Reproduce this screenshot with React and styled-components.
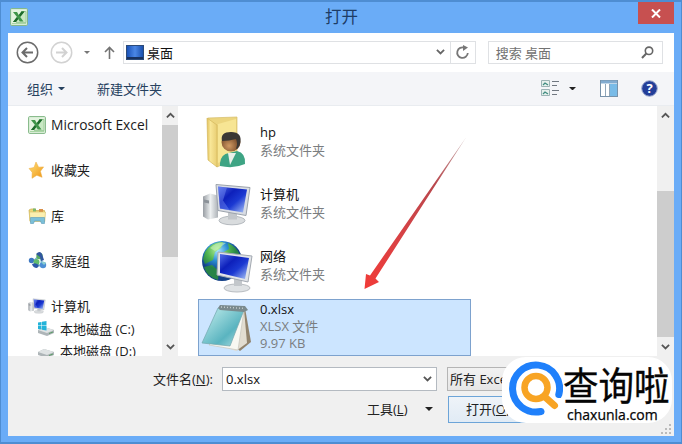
import React from "react";
import styled, { createGlobalStyle, css } from "styled-components";

const Global = createGlobalStyle`
  *{box-sizing:border-box}
  body{margin:0;overflow:hidden}
  svg{display:block;flex:none}
`;

const Window = styled.div`
  width:682px;height:444px;display:flex;flex-direction:column;
  background:#6aacf7;border:solid #4e8dd2;border-width:2px 1px 2px 1px;
  padding:0 7px 6px;
  font:13px/18px "Open Sans","Noto Sans CJK SC",sans-serif;color:#222;
`;
const TitleBar = styled.header`
  height:31px;flex:none;display:flex;align-items:flex-start;justify-content:space-between;
  color:#1d3c66;padding-right:2px;
`;
const TitleSide = styled.div`width:60px;display:flex;padding:6px 0 0 2px;`;
const Title = styled.h1`margin:0;font-size:16.5px;font-weight:400;line-height:29px;padding-left:3px;`;
const CloseSide = styled.div`width:60px;display:flex;justify-content:flex-end;`;
const Close = styled.button`
  width:36px;height:22px;border:0;background:#c75050;padding:0;margin-right:-2px;
  display:flex;align-items:center;justify-content:center;
`;
const NavBar = styled.nav`
  height:39px;flex:none;background:#fff;display:flex;align-items:center;padding:0 11px 0 8px;
`;
const NavIcon = styled.span`margin-right:${p => p.$gap}px;`;
const Field = styled.div`
  height:23px;width:${p => p.$w}px;border:1px solid #dfe1e4;background:#fff;
  display:flex;align-items:center;color:${p => p.$color || "#111"};
`;
const Address = styled(Field)`padding:0 5px 0 2px;gap:3px;`;
const Reload = styled(Field)`justify-content:center;border-left:0;margin-right:12px;`;
const Search = styled(Field)`padding:0 8px 0 7px;`;
const Grow = styled.span`flex:1;`;
const Toolbar = styled.div`
  height:34px;flex:none;background:#f4f5f8;border-bottom:1px solid #e9ecf0;
  display:flex;align-items:center;padding:0 16px 0 19px;color:#26415f;
`;
const ToolText = styled.span`display:flex;align-items:center;gap:5px;margin-right:32px;`;
const ToolIcon = styled.span`margin-left:${p => p.$gap}px;`;
const Body = styled.main`height:250px;flex:none;display:flex;background:#fff;overflow:hidden;`;
const Sidebar = styled.aside`width:154px;overflow:hidden;padding-top:7px;`;
const TreeItem = styled.div`
  display:flex;align-items:center;gap:5px;color:#1c1c1c;white-space:nowrap;
  height:${p => (p.$child ? 22 : 24)}px;
  padding-left:${p => (p.$child ? 29 : 20)}px;
  margin-bottom:${p => (p.$child ? 0 : p.$tight ? 0 : 21.3)}px;
  ${p => p.$latin && css`font-size:13.8px;`}
`;
const ScrollBar = styled.div`
  width:${p => p.$w}px;flex:none;background:#f0f0f0;display:flex;flex-direction:column;align-items:center;
`;
const ScrollButton = styled.div`height:18px;display:flex;align-items:center;justify-content:center;`;
const Thumb = styled.div`
  width:100%;background:#cdcdcd;height:${p => p.$h}px;
  margin:${p => p.$top}px 0 auto;
`;
const Files = styled.section`flex:1;padding:5px 0 0 20px;position:relative;`;
const FileItem = styled.div`
  width:273px;height:62px;display:flex;align-items:center;padding-left:4px;gap:9px;
  border:1px solid transparent;
  ${p => p.$selected && css`height:57px;margin-top:2px;background:#cce5ff;border-color:#7da2ce;line-height:17px;`}
`;
const FileText = styled.div`display:flex;flex-direction:column;padding-bottom:2px;`;
const Name = styled.span`color:#111;`;
const Detail = styled.span`color:#7a7d80;`;
const ArrowMark = styled.svg`position:absolute;left:183px;top:30px;`;
const Footer = styled.footer`
  height:80px;flex:none;background:#f0f0f0;display:flex;flex-direction:column;padding-top:11px;position:relative;
`;
const FormRow = styled.div`display:flex;align-items:center;height:${p => p.$h}px;`;
const FileLabel = styled.label`width:214px;padding-left:145px;white-space:nowrap;`;
const NameBox = styled.div`
  width:215px;height:24px;border:1px solid #b4bac1;background:#fff;color:#111;
  display:flex;align-items:center;justify-content:space-between;padding:0 4px 0 3px;margin-right:10px;
`;
const TypeBox = styled.div`
  width:217px;height:24px;border:1px solid #b5b5b5;background:linear-gradient(#f2f2f2,#e6e6e6);
  padding:2px 2px;white-space:nowrap;overflow:hidden;
`;
const Tools = styled.div`
  width:440px;padding:0 15px 0 359px;display:flex;justify-content:space-between;align-items:center;white-space:nowrap;
`;
const OpenButton = styled.button`
  width:104px;height:27px;border:1px solid #6ca4d8;background:linear-gradient(#eef3f8,#e1ebf5);
  font:inherit;color:#222;padding:0 0 0 17px;text-align:left;white-space:nowrap;
`;
const Watermark = styled.div`
  position:absolute;left:494px;top:1px;width:170px;height:66px;border-radius:24px;background:#fff;
  display:flex;padding:4px 0 0 6px;
`;
const BrandText = styled.div`
  display:flex;flex-direction:column;color:#050505;white-space:nowrap;
`;
const BrandName = styled.span`
  font:400 35.5px/42px "Noto Sans CJK SC",sans-serif;height:42px;transform:translateY(1px) scaleY(1.1);
  -webkit-text-stroke:.3px #050505;
`;
const BrandUrl = styled.span`font:500 14px/16px "Open Sans",sans-serif;padding-left:4px;margin-top:4px;-webkit-text-stroke:.25px #050505;`;
const Grip = styled.svg`position:absolute;right:3px;bottom:2px;`;

const Chevron = ({ up, c = "#555", s = 9 }) => (
  <svg width={s} height={s * 0.7} viewBox="0 0 10 7"><path d={up ? "M1 6 5 2l4 4" : "M1 1l4 4 4-4"} fill="none" stroke={c} strokeWidth="2" /></svg>
);
const Triangle = ({ c = "#222", w = 8 }) => (
  <svg width={w} height={w / 2} viewBox="0 0 8 4"><path d="M0 0h8L4 4z" fill={c} /></svg>
);
const ExcelIcon = ({ s = 17 }) => (
  <svg width={s} height={s} viewBox="0 0 18 18">
    <rect x=".6" y=".6" width="16.8" height="16.8" rx="1" fill="#e3f3df" stroke="#7fb583" />
    <path d="M11 3.500h5v11H6" fill="#c9e8c4" stroke="#8cc08a" strokeWidth=".7" />
    <path d="M3 4h4l1.700 3L11.500 3.500h3l-4.300 5.500 3.300 4.500h-3.700L8.200 11 6 14H3l4-5z" fill="#3f9549" />
    <path d="M11.500 3.500h3l-4 5-1.500-1.500zM3 14l3.700-4.700L8.200 11 6 14z" fill="#1e6a2c" />
    <path d="M2 15.500h14" stroke="#a9d6a5" />
  </svg>
);
const Back = ({ c, forward }) => (
  <svg width="23" height="23" viewBox="0 0 23 23" fill="none" stroke={c}>
    <circle cx="11.500" cy="11.500" r="10.200" strokeWidth="1.500" />
    <path d={forward ? "M6 11.500h10M12 7l4.500 4.500L12 16" : "M17 11.500H7M11 7l-4.500 4.500L11 16"} strokeWidth="2" />
  </svg>
);
const StarIcon = () => (
  <svg width="18" height="18" viewBox="0 0 18 18">
    <defs><linearGradient id="st" x2="1" y2="1"><stop stopColor="#ffe27a" /><stop offset="1" stopColor="#ef9413" /></linearGradient></defs>
    <path d="M8 1l2.600 5.200 5-.3-3.200 4.400 1.700 6-5.300-2-4.800 3 .2-6L1 7.500l5-1z" fill="url(#st)" stroke="#eba83b" strokeWidth=".5" />
  </svg>
);
const LibraryIcon = () => (
  <svg width="19" height="18" viewBox="0 0 19 18">
    <path d="M1 3l2-1h4l1 1.500h8.500V14H2z" fill="#efd879" stroke="#c8ac4d" strokeWidth=".7" />
    <path d="M5 1.500h3v3H5z" fill="#7fb86c" /><path d="M11 2h4v3h-4z" fill="#d9904a" />
    <path d="M1.500 5h16l-.7 9.500H2z" fill="#fbefb0" stroke="#d5bd67" strokeWidth=".6" />
    <path d="M2.500 10.500h14V16.500h-3l-1-2.500h-6l-1 2.500h-3z" fill="#7bc0d9" stroke="#5a9ab8" strokeWidth=".6" />
  </svg>
);
const HomegroupIcon = () => (
  <svg width="19" height="18" viewBox="0 0 19 18">
    <path d="M6 9l5-5M7 10l5 4M13 5l1 8" stroke="#7bb5cc" strokeWidth="2" />
    <circle cx="3.500" cy="8.500" r="2.700" fill="#3e78c2" /><circle cx="11.500" cy="4" r="3.200" fill="#58aa64" />
    <path d="M8 2q4-4 6 0l2 6-3 1-1-4z" fill="#31579f" />
    <circle cx="8.500" cy="10" r="3" fill="#63bd6d" /><path d="M4 12q5-2 7 2l-2 2q-4 0-5-4z" fill="#2c59a8" />
    <circle cx="15" cy="13" r="3.200" fill="#4d8fd4" /><path d="M13 10q3-1 5 1l-2 2z" fill="#8acfcf" />
  </svg>
);
const ComputerIcon = ({ w, h }) => (
  <svg width={w} height={h} viewBox="0 0 50 42">
    <defs>
      <linearGradient id="scr" x2="1" y2="1"><stop stopColor="#536de8" /><stop offset=".35" stopColor="#0d20bb" /><stop offset=".6" stopColor="#1b39d2" /><stop offset="1" stopColor="#b4cdf7" /></linearGradient>
      <linearGradient id="tow" x2="1"><stop stopColor="#989da3" /><stop offset=".5" stopColor="#edf0f1" /><stop offset="1" stopColor="#aeb3b8" /></linearGradient>
    </defs>
    <path d="M1 13l7-3 8 2v22L6 36 1 33z" fill="url(#tow)" />
    <path d="M2 16l5 1v3l-5-1z" fill="#8c9299" />
    <ellipse cx="30" cy="37" rx="13" ry="4.300" fill="#d9dcde" stroke="#b5babf" />
    <path d="M26 29h9v7h-9z" fill="#c3c7cb" />
    <path d="M14 1l34 3-4 28-28-5z" fill="#d9dde4" stroke="#9ca3ac" />
    <path d="M16 3l29 3-4 23-23-4z" fill="url(#scr)" />
    <path d="M16 3l9 1-4 13 7 10-10-2z" fill="#8ca5ff" opacity=".35" />
  </svg>
);
const NetworkIcon = () => (
  <svg width="52" height="53" viewBox="0 0 52 53">
    <defs>
      <radialGradient id="gl" cx=".4" cy=".25"><stop stopColor="#a7e4ff" /><stop offset=".5" stopColor="#2a8ed2" /><stop offset="1" stopColor="#123f87" /></radialGradient>
      <radialGradient id="land" cx=".4" cy=".2"><stop stopColor="#b5f09c" /><stop offset=".6" stopColor="#4fb450" /><stop offset="1" stopColor="#278347" /></radialGradient>
    </defs>
    <circle cx="21" cy="21" r="20" fill="url(#gl)" />
    <path d="M4 12Q11 1 22 2l-2 6-6 4-2 8-8 4-2-5zM27 3q9 4 12 12l-8-2-5 4-5-4 7-4zM3 27l8-2 7 6-1 9Q6 37 3 27z" fill="url(#land)" />
    <path d="M9 8q8-7 16-5L14 11z" fill="#c9f2bd" opacity=".6" />
    <ellipse cx="36" cy="48" rx="13" ry="4" fill="#dfe2e4" stroke="#b9bdc1" /><path d="M33 37h8v9h-8z" fill="#c3c7cb" />
    <path d="M17 12l34 4-4 26-31-7z" fill="#e1e4e8" stroke="#a3a9b1" />
    <path d="M19 14l29 4-4 21-25-6z" fill="url(#scr)" />
  </svg>
);
const UserFolderIcon = () => (
  <svg width="50" height="53" viewBox="0 0 50 53">
    <defs>
      <linearGradient id="fo" x2="1"><stop stopColor="#e3c15b" /><stop offset=".35" stopColor="#f8e697" /><stop offset="1" stopColor="#e9ce73" /></linearGradient>
      <radialGradient id="face" cx=".4" cy=".7"><stop stopColor="#d09a63" /><stop offset="1" stopColor="#7d4f2c" /></radialGradient>
    </defs>
    <path d="M6 2l29-1v41l-20 9z" fill="#ecd57e" stroke="#d6bd6a" strokeWidth=".7" />
    <path d="M16 8l18-5v36l-18 8z" fill="#f7e594" />
    <path d="M5 2l10 7v42l-9-7z" fill="url(#fo)" stroke="#d4b75b" strokeWidth=".7" />
    <path d="M18 47q1-9 9-10l8-2q9 2 8 13-11 5-25 2z" fill="#3ea484" />
    <path d="M26 37l2 12 6-12z" fill="#e9f0e9" />
    <circle cx="29" cy="26" r="9.500" fill="url(#face)" />
    <path d="M20 25q-2-9 9-9 12 0 9 12-2 5-4 5 2-6 0-10-7 2-14 2z" fill="#3b3835" />
  </svg>
);
const NotebookIcon = () => (
  <svg width="52" height="51" viewBox="0 0 52 51">
    <defs><linearGradient id="nb" x2="1" y2="1"><stop stopColor="#9bd3d7" /><stop offset=".25" stopColor="#9fdadd" /><stop offset=".65" stopColor="#5ab4c0" /><stop offset="1" stopColor="#b9e3e6" /></linearGradient></defs>
    <path d="M44 6l6 34-11 9-5-4z" fill="#91836d" /><path d="M43 7l3 34-11 8-14-5z" fill="#e2ddd1" />
    <path d="M43 8L37 48 8 43z" fill="#f8f8f2" stroke="#c7c5bd" strokeWidth=".7" />
    <path d="M17 6l26 2-14 36-28-3z" fill="url(#nb)" stroke="#72a6ad" strokeWidth=".7" />
    <path d="M17 6l2-3 25 1 3 4-4 2-24-2z" fill="#7a8a8d" /><path d="M20 5l24 1.500" stroke="#c4cccc" strokeWidth="1.500" strokeDasharray="1 2" />
  </svg>
);
const DriveIcon = ({ system }) => (
  <svg width="18" height="16" viewBox="0 0 18 16">
    <path d="M1 9l6-3 10 3v3l-7 3-9-3z" fill="#aeb5b8" /><path d="M1 9l6-3 10 3-7 3z" fill="#dfe3e4" /><path d="M12 12.500l4-1.500" stroke="#5b9d66" />
    {system && <path d="M1 1.500l3.500-.6v3.600H1zM5 .8L9.500 0v4.500H5zM1 5h3.500v3.600L1 8zM5 5h4.500v4.400L5 8.700z" fill="#22b3d9" />}
  </svg>
);
const BrandLogo = () => (
  <svg width="55" height="58" viewBox="0 0 55 58" fill="none" strokeLinecap="round">
    <path d="M33 50.500A23.500 23.500 0 1 1 50.800 33.500" stroke="#1f80fb" strokeWidth="7" />
    <circle cx="28" cy="26.500" r="11.500" stroke="#f8a423" strokeWidth="6.500" />
    <path d="M37 36l9.500 8.500" stroke="#f8a423" strokeWidth="7" />
  </svg>
);

const places = [
  ["Microsoft Excel", <ExcelIcon s={18} />, true],
  ["收藏夹", <StarIcon />],
  ["库", <LibraryIcon />],
  ["家庭组", <HomegroupIcon />],
];
const files = [
  ["hp", <UserFolderIcon />], ["计算机", <ComputerIcon w={50} h={43} />], ["网络", <NetworkIcon />],
];
const IconSlot = styled.span`width:${p => p.$w}px;flex:none;display:flex;justify-content:center;`;

export default function App() {
  return (
    <Window>
      <Global />
      <TitleBar>
        <TitleSide><ExcelIcon s={18} /></TitleSide>
        <Title>打开</Title>
        <CloseSide><Close aria-label="关闭"><svg width="10" height="9" viewBox="0 0 10 9"><path d="M1 .5l8 8M9 .5l-8 8" stroke="#fff" strokeWidth="2" /></svg></Close></CloseSide>
      </TitleBar>
      <NavBar>
        <NavIcon $gap={11}><Back c="#6b6b6b" /></NavIcon>
        <NavIcon $gap={11}><Back c="#d2d2d2" forward /></NavIcon>
        <NavIcon $gap={14}><Triangle c="#777" w={6} /></NavIcon>
        <NavIcon $gap={8}><svg width="11" height="13" viewBox="0 0 11 13"><path d="M5.500 13V2M1 6l4.500-4.500L10 6" fill="none" stroke="#737373" strokeWidth="1.600" /></svg></NavIcon>
        <Address $w={329}>
          <svg width="18" height="15" viewBox="0 0 18 15"><defs><linearGradient id="dk" x2="1"><stop stopColor="#174fb5" /><stop offset=".5" stopColor="#4b87e5" /><stop offset="1" stopColor="#174ca9" /></linearGradient></defs><rect x=".5" y=".5" width="17" height="14" fill="url(#dk)" stroke="#2d4b78" /><path d="M1 13h16" stroke="#18315e" strokeWidth="2" /></svg>
          桌面<Grow /><Chevron c="#666" />
        </Address>
        <Reload $w={25}><svg width="15" height="15" viewBox="0 0 15 15"><path d="M9.500 2.700A5.300 5.300 0 1 0 12.800 8" fill="none" stroke="#777" strokeWidth="1.800" /><path d="M8 0v6l5-3.500z" fill="#777" /></svg></Reload>
        <Search $w={176} $color="#727272">搜索 桌面<Grow /><svg width="13" height="13" viewBox="0 0 13 13"><circle cx="8" cy="4.800" r="3.700" fill="none" stroke="#666" strokeWidth="1.600" /><path d="M5.300 7.500L1 12" stroke="#666" strokeWidth="2" /></svg></Search>
      </NavBar>
      <Toolbar>
        <ToolText>组织 <Triangle c="#26415f" w={7} /></ToolText><ToolText>新建文件夹</ToolText><Grow />
        <svg width="18" height="17" viewBox="0 0 18 17"><path d="M.5.500h8v6h-8zM.5 9.500h8v6h-8z" fill="#e6f0ec" stroke="#9bb3b4" /><path d="M2 5l2-2 3 2M2 14l2-2 3 2" fill="none" stroke="#3f8c81" strokeWidth="1.300" /><path d="M11 1.500h7M11 5.500h5M11 10.500h7M11 14.500h5" stroke="#707780" strokeWidth="1.200" /></svg>
        <ToolIcon $gap={10}><Triangle w={7} /></ToolIcon>
        <ToolIcon $gap={24}><svg width="18" height="17" viewBox="0 0 18 17"><rect x=".5" y=".5" width="17" height="16" fill="#fff" stroke="#7792aa" /><path d="M1 2h16" stroke="#83acd0" strokeWidth="3" /><path d="M10 4h7v12h-7z" fill="#79bbe7" /><path d="M5.500 4v12M9.500 4v12" stroke="#91a6b8" /></svg></ToolIcon>
        <ToolIcon $gap={23}><svg width="17" height="17" viewBox="0 0 17 17"><circle cx="8.500" cy="8.500" r="7.800" fill="#233e99" stroke="#a1add0" /><text x="8.500" y="13" textAnchor="middle" fill="#fff" fontFamily="Open Sans" fontWeight="700" fontSize="13">?</text></svg></ToolIcon>
      </Toolbar>
      <Body>
        <Sidebar>
          {places.map(([n, icon, latin]) => <TreeItem key={n} $latin={latin}><IconSlot $w={18}>{icon}</IconSlot>{n}</TreeItem>)}
          <TreeItem $tight><IconSlot $w={18}><ComputerIcon w={18} h={16} /></IconSlot>计算机</TreeItem>
          <TreeItem $child><DriveIcon system />本地磁盘 (C:)</TreeItem>
          <TreeItem $child><DriveIcon />本地磁盘 (D:)</TreeItem>
        </Sidebar>
        <ScrollBar $w={16}><ScrollButton><Chevron up /></ScrollButton><Thumb $top={1} $h={132} /><ScrollButton><Chevron /></ScrollButton></ScrollBar>
        <Files>
          {files.map(([n, icon]) => <FileItem key={n}><IconSlot $w={48}>{icon}</IconSlot><FileText><Name>{n}</Name><Detail>系统文件夹</Detail></FileText></FileItem>)}
          <FileItem $selected><IconSlot $w={48}><NotebookIcon /></IconSlot><FileText><Name>0.xlsx</Name><Detail>XLSX 文件</Detail><Detail>9.97 KB</Detail></FileText></FileItem>
          <ArrowMark width="110" height="156" viewBox="0 0 110 156">
            <defs><linearGradient id="ar" x1="1" y1="0" x2="0" y2="1"><stop stopColor="#c9b3b3" /><stop offset=".3" stopColor="#b8484d" /><stop offset=".65" stopColor="#d84245" /><stop offset="1" stopColor="#f13b38" /></linearGradient></defs>
            <path d="M105 1.500L14.500 142.500L18 146l-14.500 7L5 138l4 1.500z" fill="url(#ar)" />
          </ArrowMark>
        </Files>
        <ScrollBar $w={17}><ScrollButton><Chevron up /></ScrollButton><Thumb $top={67} $h={146} /><ScrollButton><Chevron /></ScrollButton></ScrollBar>
      </Body>
      <Footer>
        <FormRow $h={24}>
          <FileLabel>文件名(<u>N</u>):</FileLabel><NameBox>0.xlsx<Chevron /></NameBox><TypeBox>所有 Excel 文件</TypeBox>
        </FormRow>
        <FormRow $h={36}>
          <Tools><span>工具(<u>L</u>)</span><Triangle /></Tools><OpenButton>打开(<u>O</u>)</OpenButton>
        </FormRow>
        <Watermark><BrandLogo /><BrandText><BrandName>查询啦</BrandName><BrandUrl>chaxunla.com</BrandUrl></BrandText></Watermark>
        <Grip width="10" height="10" viewBox="0 0 10 10"><path d="M8 0h2v2H8zM4 4h2v2H4zM8 4h2v2H8zM0 8h2v2H0zM4 8h2v2H4zM8 8h2v2H8z" fill="#bbb" /></Grip>
      </Footer>
    </Window>
  );
}
